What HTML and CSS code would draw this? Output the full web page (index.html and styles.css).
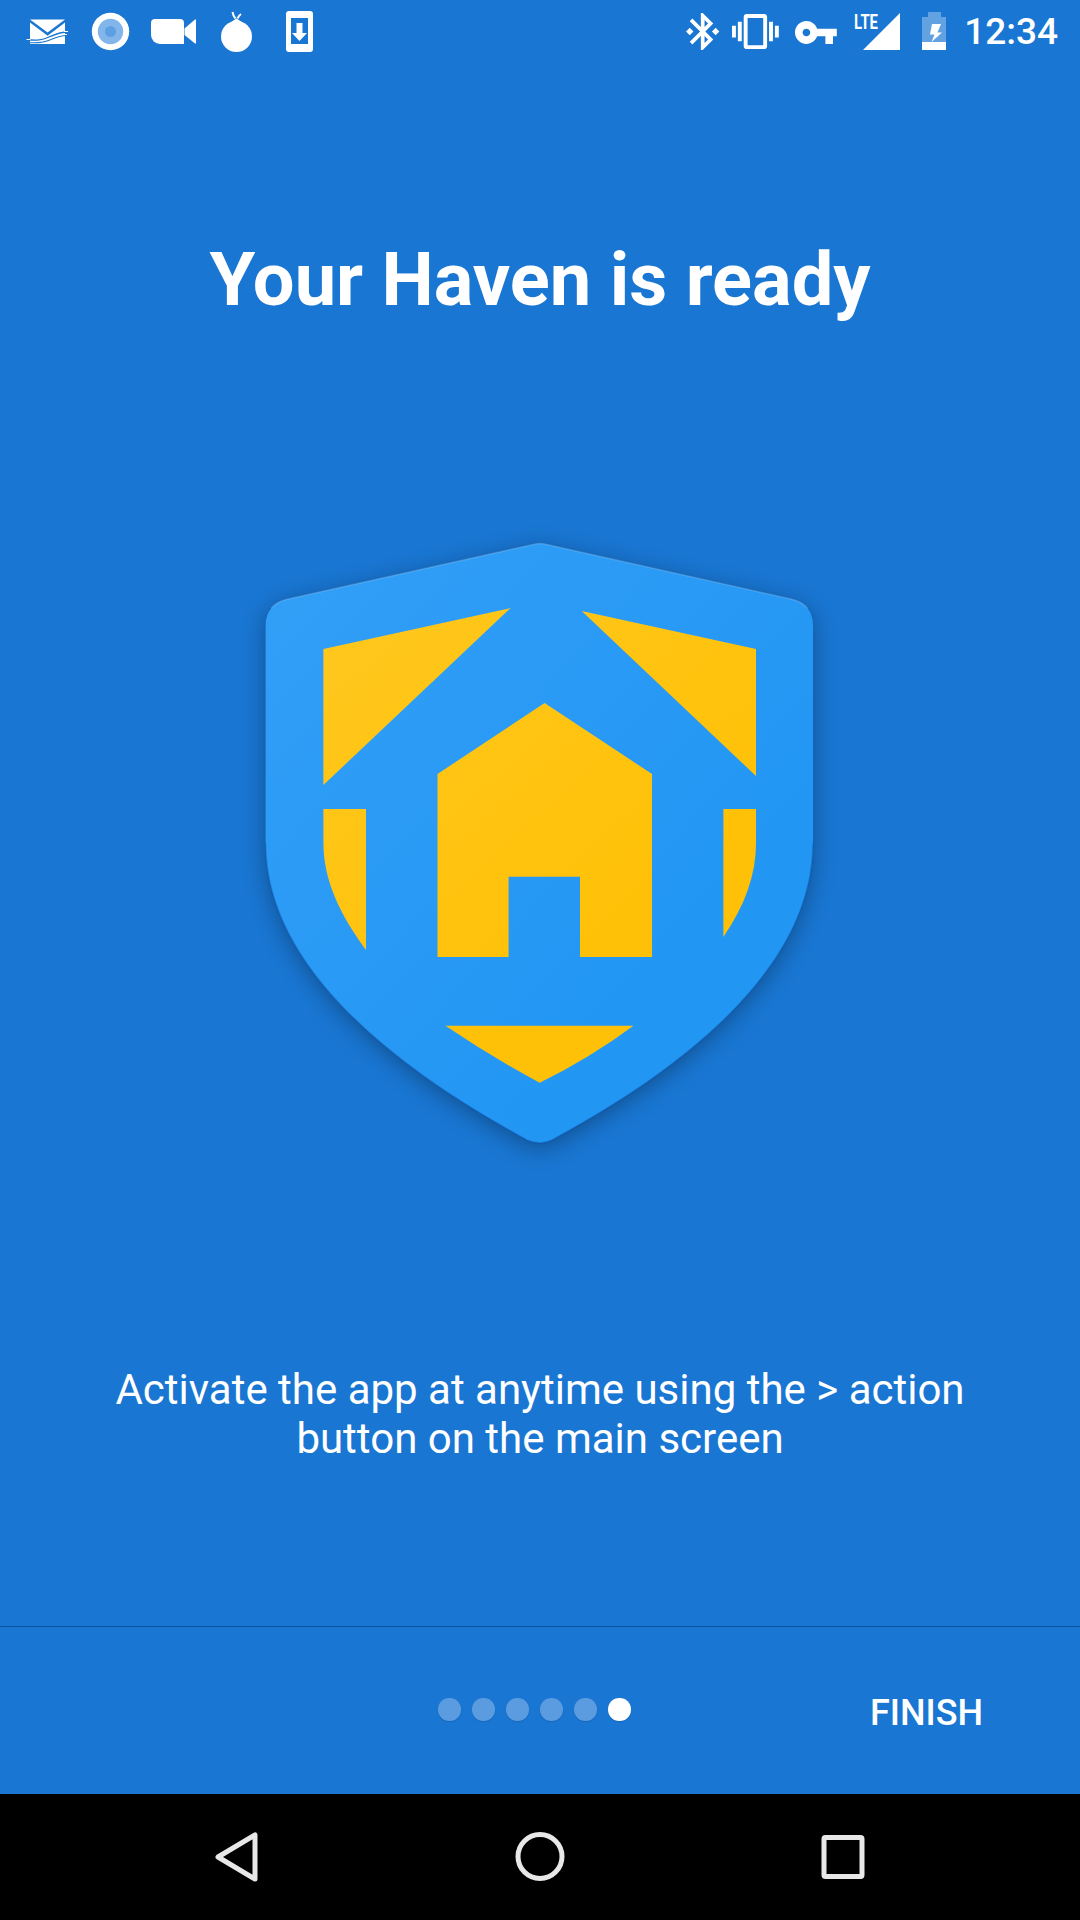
FILE: index.html
```html
<!DOCTYPE html>
<html lang="en">
<head>
  <meta charset="UTF-8">
  <title>Haven</title>
  <link rel="stylesheet" href="styles.css">
</head>
<body>
  <div class="status-bar">
    <div class="status-left">
      <!-- mail -->
      <svg class="status-icon" viewBox="16 0 63 63">
        <path fill="#fff" d="M30 19.500h35L47.600 32.600z"/>
        <path fill="#fff" d="M30 22.500l17.600 13.200L65 22.500V44H30z"/>
        <path fill="none" stroke="#1976D2" stroke-width="1.300" d="M27 39.500c10 1.500 15 .5 22-2.500s11-5 19-5"/>
        <path fill="none" stroke="#1976D2" stroke-width="1.100" d="M28 42.500c10 1 16 0 23-3s10-4 16-4"/>
        <path fill="none" stroke="#fff" stroke-width="1" d="M26.500 39.500h4M64 31.500h4M64 34.500h3"/>
      </svg>
      <!-- orbot -->
      <svg class="status-icon" viewBox="79 0 63 63">
        <circle cx="110.500" cy="31.500" r="18.700" fill="#fff"/>
        <circle cx="110.500" cy="31.500" r="12.700" fill="#82b6ea"/>
        <circle cx="110.500" cy="31.500" r="5.500" fill="#5c9fe3"/>
      </svg>
      <!-- camera -->
      <svg class="status-icon" viewBox="142 0 63 63">
        <path fill="#fff" d="M155 19h25a4 4 0 0 1 4 4v21h-24a9 9 0 0 1-9-9V23a4 4 0 0 1 4-4z"/>
        <path fill="#fff" d="M184.500 28.500l10.500-9h1v24h-1l-10.500-8.500z"/>
      </svg>
      <!-- pear -->
      <svg class="status-icon" viewBox="205 0 63 63">
        <circle cx="236.500" cy="36.500" r="15.500" fill="#fff"/>
        <path fill="#fff" d="M225 26l11.500-7.500L248 26z"/>
        <path fill="none" stroke="#fff" stroke-width="2" d="M232.500 12c.5 3 1.500 5 3 6.500M241 14c-1.500 1-2.500 2.500-3.500 4.500"/>
      </svg>
      <!-- download to phone -->
      <svg class="status-icon" viewBox="268 0 63 63">
        <rect x="286" y="11" width="27" height="41" rx="3" fill="#fff"/>
        <rect x="291" y="18" width="17" height="26" fill="#1976D2"/>
        <path fill="#fff" d="M296.500 23h6v10h4.500l-7.500 8-7.500-8h4.500z"/>
      </svg>
    </div>
    <div class="status-right">
      <svg class="status-icon bt" viewBox="676 0 53 63">
        <path fill="#fff" transform="translate(680.500 9.300) scale(1.85)" d="M7 12l-2-2-2 2 2 2 2-2zm10.710-4.290L12 2h-1v7.590L6.410 5 5 6.410 10.590 12 5 17.590 6.410 19 11 14.410V22h1l5.710-5.710-4.300-4.290 4.300-4.290zM13 5.830l1.880 1.880L13 9.590V5.830zm1.880 10.460L13 18.170v-3.760l1.880 1.880zM19 10l-2 2 2 2 2-2-2-2z"/>
      </svg>
      <svg class="status-icon vibe" viewBox="729 0 53 63">
        <path fill="#fff" transform="translate(732 8.150) scale(1.95)" d="M0 15h2V9H0v6zm3 2h2V7H3v10zm19-8v6h2V9h-2zm-3 8h2V7h-2v10zM16.500 3h-9C6.670 3 6 3.670 6 4.500v15c0 .83.67 1.500 1.500 1.500h9c.83 0 1.500-.67 1.500-1.500v-15c0-.83-.67-1.500-1.500-1.500zM16 19H8V5h8v14z"/>
      </svg>
      <svg class="status-icon key" viewBox="782 0 68 63">
        <path fill="#fff" transform="translate(793.100 9.700) scale(1.9)" d="M12.650 10C11.830 7.670 9.610 6 7 6c-3.310 0-6 2.690-6 6s2.690 6 6 6c2.610 0 4.830-1.670 5.650-4H17v4h4v-4h2v-4H12.650zM7 14c-1.100 0-2-.9-2-2s.9-2 2-2 2 .9 2 2-.9 2-2 2z"/>
      </svg>
      <svg class="status-icon signal" viewBox="850 0 56 63">
        <path fill="#fff" d="M900 13v37h-37z"/>
        <text class="lte" x="854" y="29" textLength="24" lengthAdjust="spacingAndGlyphs">LTE</text>
      </svg>
      <svg class="status-icon battery" viewBox="906 0 56 63">
        <path fill="#fff" fill-opacity=".32" d="M928 12h13v5h5v25h-24V17h6z"/>
        <rect x="922" y="42" width="24" height="8" fill="#fff"/>
        <path fill="#fff" d="M932 24h9l-3.500 8.500H942L931.500 42l3-7.500H930z"/>
      </svg>
      <span class="clock">12:34</span>
    </div>
  </div>

  <div class="slide">
    <h1>Your Haven is ready</h1>

    <svg class="logo" viewBox="220 500 640 700">
      <defs>
        <linearGradient id="shield-fill" x1="0" y1="0" x2="1" y2="1">
          <stop offset="0" stop-color="#339ff7"/>
          <stop offset=".75" stop-color="#2196f3"/>
        </linearGradient>
        <linearGradient id="yellow-fill" gradientUnits="userSpaceOnUse" x1="320" y1="600" x2="760" y2="1080">
          <stop offset="0" stop-color="#ffc81f"/>
          <stop offset=".7" stop-color="#ffc107"/>
        </linearGradient>
      </defs>
      <path class="shield" fill="url(#shield-fill)" d="M533 544.500Q540 542.500 547 544.500L791 599Q813 604 813 626V843C813 960 700 1060 552 1140Q540 1146 527 1140C380 1060 265.600 960 265.600 843V626Q265.600 604 288 599z"/>
      <path class="rim-top" d="M271.200 608.200Q276.800 601.500 288 599L533 544.500Q540 542.500 547 544.500L791 599Q802 601.500 807.400 608.200"/>
      <path class="rim-bottom" d="M813 843C813 960 700 1060 552 1140Q540 1146 527 1140C380 1060 265.600 960 265.600 843"/>
      <g fill="url(#yellow-fill)">
        <path d="M323.400 649L510.600 608L323.400 785z"/>
        <path d="M581.700 611L756 649V776z"/>
        <path d="M544.600 703L652 774V957H580V876.700H508.600V957H437.500V774z"/>
        <path d="M323.400 809H366V950C340 915 323.400 880 323.400 843z"/>
        <path d="M723.400 809H756V843C756 875 745 905 723.400 937z"/>
        <path d="M445.500 1025.700H633.400Q590 1058 539.700 1082.700Q490 1056 445.500 1025.700z"/>
      </g>
    </svg>

    <p class="hint">Activate the app at anytime using the &gt; action<br>button on the main screen</p>
  </div>

  <div class="pager">
    <div class="dots">
      <span class="dot"></span>
      <span class="dot"></span>
      <span class="dot"></span>
      <span class="dot"></span>
      <span class="dot"></span>
      <span class="dot active"></span>
    </div>
    <span class="finish">FINISH</span>
  </div>

  <div class="nav-bar">
    <svg class="nav-icon" viewBox="192 0 90 126">
      <path d="M255 41v44L218 63z"/>
    </svg>
    <svg class="nav-icon" viewBox="495 0 90 126">
      <circle cx="540" cy="62.500" r="22"/>
    </svg>
    <svg class="nav-icon" viewBox="799 0 90 126">
      <rect x="825" y="43.500" width="38" height="39" rx="1.500"/>
    </svg>
  </div>
</body>
</html>
```

FILE: styles.css
```css
* {
  box-sizing: border-box;
}

body {
  margin: 0;
  width: 1080px;
  height: 1920px;
  display: flex;
  flex-direction: column;
  background-color: #1976d2;
  color: #fff;
  font-family: Roboto, "Liberation Sans", sans-serif;
  overflow: hidden;
}

.status-bar {
  height: 63px;
  display: flex;
  justify-content: space-between;
  padding: 0 22px 0 16px;
}

.status-left,
.status-right {
  display: flex;
  align-items: center;
}

.status-icon {
  display: block;
  width: 63px;
  height: 63px;
}

.status-icon.bt,
.status-icon.vibe {
  width: 53px;
}

.status-icon.key {
  width: 68px;
}

.status-icon.signal,
.status-icon.battery {
  width: 56px;
}

.lte {
  fill: #fff;
  font-size: 21px;
  font-weight: 700;
}

.clock {
  width: 96px;
  text-align: right;
  font-size: 37px;
  font-weight: 500;
  line-height: 63px;
}

.slide {
  flex: 1;
  display: flex;
  flex-direction: column;
  align-items: center;
}

h1 {
  margin: 177px 0 0;
  font-size: 74px;
  line-height: 80px;
  font-weight: 700;
}

.logo {
  display: block;
  width: 640px;
  height: 700px;
  margin-top: 180px;
  overflow: visible;
}

.shield {
  filter: drop-shadow(0 5px 11px rgba(0, 0, 0, 0.32));
}

.rim-top,
.rim-bottom {
  fill: none;
  stroke-width: 1.5;
}

.rim-top {
  stroke: rgba(255, 255, 255, 0.16);
}

.rim-bottom {
  stroke: rgba(13, 71, 161, 0.3);
}

.hint {
  margin: 165px 0 0;
  font-size: 42px;
  line-height: 49px;
  text-align: center;
}

.pager {
  height: 168px;
  display: flex;
  align-items: flex-start;
  justify-content: space-between;
  padding: 71px 97px 0 438px;
  border-top: 1px solid #12549b;
}

.dots {
  display: flex;
  gap: 11.500px;
}

.dot {
  width: 22.500px;
  height: 22.500px;
  border-radius: 50%;
  background-color: #5b9be0;
  box-shadow: 0 1px 1px rgba(0, 0, 0, 0.12);
}

.dot.active {
  background-color: #fff;
}

.finish {
  font-size: 36px;
  line-height: 30px;
  font-weight: 500;
}

.nav-bar {
  height: 126px;
  display: flex;
  justify-content: flex-start;
  padding-left: 192px;
  gap: 213px;
  background-color: #000;
}

.nav-icon {
  display: block;
  width: 90px;
  height: 126px;
  fill: none;
  stroke: #e8e8e8;
  stroke-width: 5;
  stroke-linejoin: round;
}
```
